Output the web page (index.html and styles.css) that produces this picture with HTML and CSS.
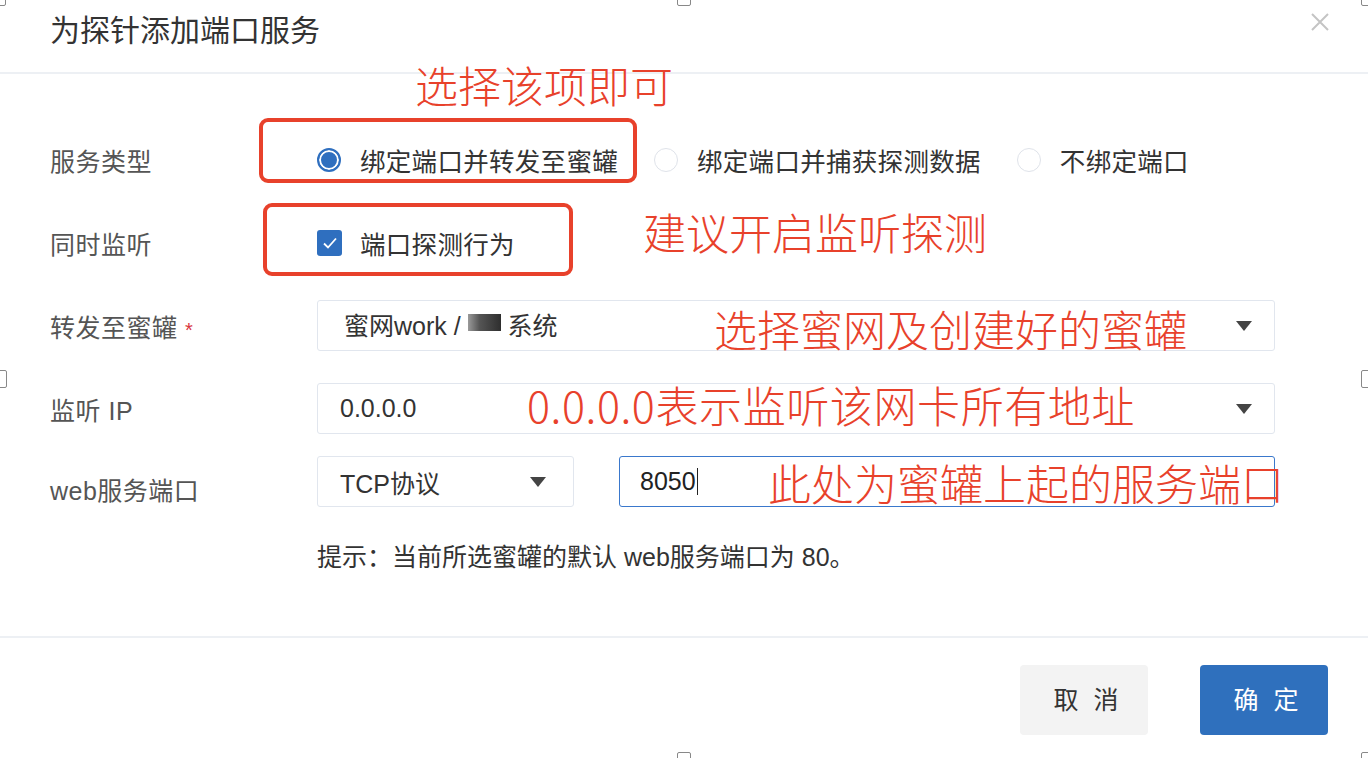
FILE: index.html
```html
<!DOCTYPE html>
<html lang="zh-CN">
<head>
<meta charset="UTF-8">
<meta name="viewport" content="width=device-width, initial-scale=1.0">
<title>为探针添加端口服务</title>
<link rel="stylesheet" href="styles.css">
</head>
<body>
<div class="dialog">
    <div class="dialog-header">
        <span class="dialog-title">为探针添加端口服务</span>
        <svg class="close" width="20" height="20" viewBox="0 0 20 20">
            <path d="M2 2 L18 18 M18 2 L2 18" stroke="#c4c4c4" stroke-width="2" fill="none"/>
        </svg>
    </div>

    <div class="dialog-body">
        <div class="row">
            <div class="label">服务类型</div>
            <div class="field radios">
                <label class="radio checked"><span class="dot"></span>绑定端口并转发至蜜罐</label>
                <label class="radio"><span class="dot"></span>绑定端口并捕获探测数据</label>
                <label class="radio"><span class="dot"></span>不绑定端口</label>
            </div>
        </div>

        <div class="row">
            <div class="label">同时监听</div>
            <div class="field">
                <label class="check">
                    <span class="box">
                        <svg width="16" height="14" viewBox="0 0 16 14">
                            <path d="M2 7.5 L6 11.5 L14 2.5" stroke="#fff" stroke-width="1.8" fill="none"/>
                        </svg>
                    </span>端口探测行为
                </label>
            </div>
        </div>

        <div class="row">
            <div class="label">转发至蜜罐 <span class="req">*</span></div>
            <div class="field">
                <div class="select wide">
                    <span class="value pot">蜜网work / <span class="redact"></span> 系统</span>
                    <span class="arrow"></span>
                </div>
            </div>
        </div>

        <div class="row">
            <div class="label">监听 IP</div>
            <div class="field">
                <div class="select wide">
                    <span class="value">0.0.0.0</span>
                    <span class="arrow"></span>
                </div>
            </div>
        </div>

        <div class="row row-port">
            <div class="label">web服务端口</div>
            <div class="field ports">
                <div class="select proto">
                    <span class="value">TCP协议</span>
                    <span class="arrow"></span>
                </div>
                <div class="input">8050<span class="caret"></span></div>
            </div>
        </div>

        <div class="hint">提示：当前所选蜜罐的默认 web服务端口为 80。</div>
    </div>

    <div class="dialog-footer">
        <button class="btn btn-cancel">取 消</button>
        <button class="btn btn-ok">确 定</button>
    </div>
</div>

<!-- 截图标注 -->
<div class="mark box-1"></div>
<div class="mark box-2"></div>
<div class="note note-1">选择该项即可</div>
<div class="note note-2">建议开启监听探测</div>
<div class="note note-3">选择蜜网及创建好的蜜罐</div>
<div class="note note-4">0.0.0.0表示监听该网卡所有地址</div>
<div class="note note-5">此处为蜜罐上起的服务端口</div>

<!-- 选区控制点 -->
<div class="handle h-tl"></div>
<div class="handle h-tm"></div>
<div class="handle h-tr"></div>
<div class="handle h-ml"></div>
<div class="handle h-mr"></div>
<div class="handle h-bm"></div>
<div class="handle h-br"></div>
</body>
</html>
```

FILE: styles.css
```css
body {
    margin: 0;
    background: #fff;
    font-family: "Liberation Sans", "Noto Sans CJK SC", sans-serif;
    color: #333;
    overflow: hidden;
}

.dialog {
    width: 1368px;
    height: 758px;
    display: flex;
    flex-direction: column;
}

.dialog-header {
    height: 74px;
    flex-shrink: 0;
    display: flex;
    align-items: center;
    justify-content: space-between;
    padding: 0 38px 16px 50px;
    box-sizing: border-box;
    border-bottom: 2px solid #edf0f4;
}

.dialog-title {
    font-size: 30px;
    color: #333;
}

.close {
    margin-top: -12px;
}

.dialog-body {
    height: 564px;
    flex-shrink: 0;
    padding-top: 60px;
    box-sizing: border-box;
    border-bottom: 2px solid #edf0f4;
}

.row {
    display: flex;
    align-items: center;
    height: 51px;
    margin-bottom: 32px;
}

.row-port {
    margin-top: -10px;
    margin-bottom: 0;
}

.label {
    width: 317px;
    flex-shrink: 0;
    padding-left: 50px;
    box-sizing: border-box;
    font-size: 25px;
    letter-spacing: 0.5px;
    color: #555;
}

.row-port .label {
    padding-top: 14px;
}

.req {
    color: #d9363e;
    font-size: 20px;
}

.field {
    display: flex;
    align-items: center;
    font-size: 25.5px;
    letter-spacing: 0.3px;
}

.radios {
    gap: 36px;
}

.radio,
.check {
    display: flex;
    align-items: center;
}

.radio .dot {
    width: 24px;
    height: 24px;
    border-radius: 50%;
    border: 1.5px solid #dfe3ea;
    box-sizing: border-box;
    margin-right: 19px;
}

.radio.checked .dot {
    border: 2px solid #2f6fbf;
    background: #2f6fbf;
    box-shadow: inset 0 0 0 2px #fff;
}

.check .box {
    width: 25px;
    height: 26px;
    border-radius: 3px;
    background: #2f6fbf;
    display: flex;
    align-items: center;
    justify-content: center;
    margin-right: 18px;
}

.select {
    height: 51px;
    border: 1.5px solid #e1e6ee;
    border-radius: 3px;
    box-sizing: border-box;
    display: flex;
    align-items: center;
    justify-content: space-between;
    padding: 0 22px 0 22px;
    font-size: 25px;
    letter-spacing: 0;
    color: #333;
}

.wide {
    width: 958px;
}

.proto {
    width: 257px;
    padding-right: 27px;
}

.value.pot {
    padding-left: 4px;
    margin-top: -4px;
}

.redact {
    display: inline-block;
    width: 33px;
    height: 17px;
    vertical-align: 4px;
    background: linear-gradient(90deg, #9a9a9a 0%, #555 35%, #2e2e2e 100%);
}

.arrow {
    width: 0;
    height: 0;
    border-left: 8px solid transparent;
    border-right: 8px solid transparent;
    border-top: 10px solid #444;
}

.ports {
    gap: 45px;
}

.input {
    width: 656px;
    height: 51px;
    border: 1.5px solid #3a78cc;
    border-radius: 3px;
    box-sizing: border-box;
    display: flex;
    align-items: center;
    padding-left: 20px;
    font-size: 25px;
    letter-spacing: 0;
    color: #222;
}

.caret {
    display: inline-block;
    width: 1px;
    height: 27px;
    background: #222;
    margin-left: 1px;
}

.hint {
    margin: 30px 0 0 317px;
    font-size: 25px;
    color: #333;
}

.dialog-footer {
    display: flex;
    justify-content: flex-end;
    gap: 52px;
    padding: 27px 40px 0 0;
}

.btn {
    width: 128px;
    height: 70px;
    border: none;
    border-radius: 4px;
    font-family: "Liberation Sans", "Noto Sans CJK SC", sans-serif;
    font-size: 25px;
    letter-spacing: 4px;
    padding: 0 0 4px 8px;
    cursor: pointer;
}

.btn-cancel {
    background: #f3f3f3;
    color: #333;
}

.btn-ok {
    background: #2f70bd;
    color: #fff;
}

/* 标注层 */
.mark {
    position: absolute;
    border: 4px solid #e8412b;
    border-radius: 9px;
    box-sizing: border-box;
}

.box-1 {
    left: 259px;
    top: 118px;
    width: 378px;
    height: 65px;
}

.box-2 {
    left: 263px;
    top: 203px;
    width: 310px;
    height: 73px;
}

.note {
    position: absolute;
    font-family: "Noto Sans CJK SC", sans-serif;
    font-size: 43px;
    line-height: 43px;
    color: #e8412b;
    font-weight: 300;
    white-space: nowrap;
}

.note-1 { left: 415px; top: 63px; }
.note-2 { left: 643px; top: 210px; }
.note-3 { left: 714px; top: 307px; }
.note-4 { left: 527px; top: 383px; }
.note-5 { left: 768px; top: 461px; }

.note-4 {
    letter-spacing: 0.6px;
}

.handle {
    position: absolute;
    width: 14px;
    height: 14px;
    background: #fff;
    border: 1.5px solid #888;
    border-radius: 2px;
    box-sizing: border-box;
}

.h-tl { left: -8px; top: -8px; }
.h-tm { left: 677px; top: -8px; }
.h-tr { left: 1361px; top: -8px; }
.h-ml { left: -7px; top: 370px; width: 14px; height: 18px; }
.h-mr { left: 1361px; top: 370px; width: 14px; height: 18px; }
.h-bm { left: 677px; top: 752px; }
.h-br { left: 1361px; top: 752px; }
```
